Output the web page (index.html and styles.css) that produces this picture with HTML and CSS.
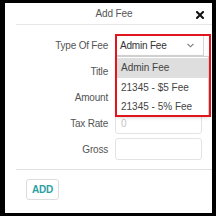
FILE: index.html
```html
<!DOCTYPE html>
<html lang="en">
<head>
    <meta charset="UTF-8">
    <meta name="viewport" content="width=device-width, initial-scale=1.0">
    <title>Add Fee</title>
    <link rel="stylesheet" href="styles.css">
</head>
<body>

<div class="modal">
    <div class="modal-header">
        <span class="modal-title">Add Fee</span>
        <button class="close-button" aria-label="Close">
            <svg width="8" height="8" viewBox="0 0 8 8">
                <path d="M1 1 L7 7 M7 1 L1 7" stroke="#111" stroke-width="2" stroke-linecap="square"/>
            </svg>
        </button>
    </div>

    <div class="modal-body">
        <div class="form-row">
            <label>Type Of Fee</label>
            <div class="select-wrap">
                <div class="select-box">
                    <span>Admin Fee</span>
                    <svg class="chevron" width="7" height="5" viewBox="0 0 7 5">
                        <path d="M0.5 0.8 L3.5 3.8 L6.5 0.8" fill="none" stroke="#777" stroke-width="1.1"/>
                    </svg>
                </div>
                <ul class="dropdown">
                    <li class="active">Admin Fee</li>
                    <li>21345 - $5 Fee</li>
                    <li>21345 - 5% Fee</li>
                </ul>
                <div class="highlight"></div>
            </div>
        </div>
        <div class="form-row">
            <label>Title</label>
            <input type="text" class="field">
        </div>
        <div class="form-row">
            <label>Amount</label>
            <input type="text" class="field">
        </div>
        <div class="form-row">
            <label>Tax Rate</label>
            <input type="text" class="field" placeholder="0">
        </div>
        <div class="form-row">
            <label>Gross</label>
            <input type="text" class="field">
        </div>
    </div>

    <div class="modal-footer">
        <button class="add-button">ADD</button>
    </div>
</div>

</body>
</html>
```

FILE: styles.css
```css
body {
    margin: 0;
    background-color: #000;
    font-family: "Liberation Sans", Arial, sans-serif;
}
.modal {
    background-color: #fff;
    margin: 3px 4px 3px 5px;
    height: 210px;
    overflow: hidden;
}
.modal-header {
    position: relative;
    margin-left: 11px;
    height: 21px;
    border-bottom: 1px solid #e6e6e6;
    display: flex;
    align-items: center;
    justify-content: center;
}
.modal-title {
    font-size: 10px;
    color: #555;
    letter-spacing: -0.1px;
}
.close-button {
    position: absolute;
    right: 8px;
    top: 8px;
    padding: 0;
    border: none;
    background: none;
    line-height: 0;
}
.modal-body {
    padding: 9px 0;
    display: flex;
    flex-direction: column;
    gap: 4px;
}
.form-row {
    display: grid;
    grid-template-columns: 103px 87px;
    column-gap: 7px;
    align-items: center;
    height: 22px;
}
.form-row label {
    text-align: right;
    font-size: 10px;
    color: #555;
    letter-spacing: -0.2px;
}
.field {
    box-sizing: border-box;
    width: 87px;
    height: 22px;
    border: 1px solid #e3e3e3;
    border-radius: 3px;
    padding: 0 5px;
    font-family: inherit;
    font-size: 10px;
    color: #333;
}
.field::placeholder {
    color: #c4c4c4;
}
.select-wrap {
    position: relative;
    height: 22px;
}
.select-box {
    box-sizing: border-box;
    width: 89px;
    height: 22px;
    border: 1px solid #d6d6d6;
    display: flex;
    align-items: center;
    justify-content: space-between;
    padding: 0 9px 0 4px;
    font-size: 10px;
    color: #333;
    letter-spacing: -0.2px;
}
.dropdown {
    position: absolute;
    top: 22px;
    left: 1px;
    width: 93px;
    margin: 0;
    padding: 1px 0 0;
    list-style: none;
    background-color: #fff;
    border: 1px solid #cfcfcf;
    box-shadow: 0 1px 3px rgba(0, 0, 0, 0.15);
    box-sizing: border-box;
    z-index: 2;
}
.dropdown li {
    height: 19px;
    line-height: 19px;
    padding-left: 4px;
    font-size: 10px;
    color: #444;
    white-space: nowrap;
}
.dropdown li.active {
    background-color: #dedede;
    height: 20px;
    line-height: 20px;
}
.highlight {
    position: absolute;
    left: 0;
    top: 0;
    width: 96px;
    height: 83px;
    border: 2px solid #e0161c;
    box-sizing: border-box;
    z-index: 3;
}
.modal-footer {
    margin-left: 11px;
    border-top: 1px solid #e0e0e0;
    padding: 9px 0 0 10px;
}
.add-button {
    width: 33px;
    height: 21px;
    padding: 0;
    background-color: #fff;
    border: 1px solid #dcdcdc;
    border-radius: 3px;
    font-family: inherit;
    font-size: 10px;
    font-weight: bold;
    color: #2a9fa3;
    letter-spacing: -0.3px;
}
```
